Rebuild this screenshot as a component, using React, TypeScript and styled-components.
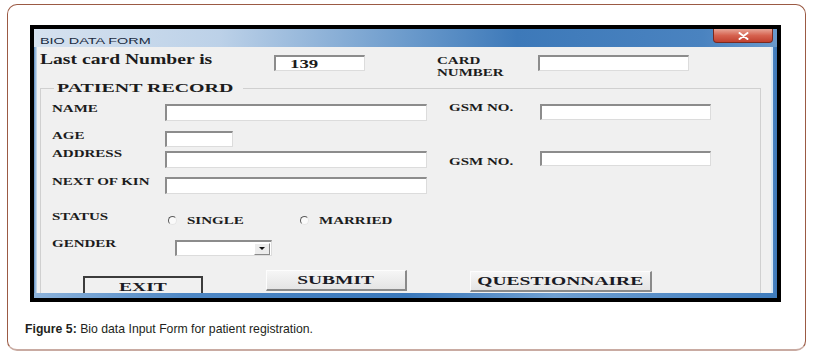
import styled, { createGlobalStyle } from "styled-components";

const Global = createGlobalStyle`
  html, body { margin: 0; padding: 0; background: #fff; }
  body { font-family: "Liberation Sans", Arial, sans-serif; }
`

const Card = styled.div`
  box-sizing: border-box;
  width: 799px;
  height: 347px;
  margin: 4px 0 0 7px;
  padding: 20px 0 0 17px;
  border: 1px solid #9b5a44;
  border-bottom: 2px solid #c9aba2;
  border-radius: 10px;
  background: #fff;
`

const Frame = styled.div`
  box-sizing: border-box;
  width: 751px;
  height: 277px;
  margin-left: 5px;
  border: 4px solid #000;
  display: flex;
  flex-direction: column;
`

const TitleBar = styled.div`
  height: 18px;
  flex-shrink: 0;
  display: flex;
  justify-content: space-between;
  align-items: flex-start;
  padding-left: 6px;
  background: linear-gradient(to right, #d6e2ef 0%, #bcd1e8 25%, #6c9bcc 50%, #3d79b9 65%, #4a83c0 90%, #6a9acd 100%);
`

const Title = styled.div`
  margin-top: 3px;
  font-family: "Liberation Sans", Arial, sans-serif;
  font-size: 9px;
  line-height: 18px;
  color: #1b2b40;
  white-space: nowrap;
  transform: scaleX(1.6);
  transform-origin: left center;
`

const CloseBtn = styled.div`
  box-sizing: border-box;
  width: 60px;
  height: 14px;
  margin-right: 4px;
  display: flex;
  align-items: center;
  justify-content: center;
  border: 1px solid #7a2a20;
  border-top: none;
  border-radius: 0 0 4px 4px;
  background: linear-gradient(to bottom, #e8a597 0%, #d6624f 50%, #c0402f 100%);
`

const WindowRow = styled.div`
  flex: 1;
  display: flex;
  min-height: 0;
`

const Edge = styled.div<{ $w: number; $bg: string }>`
  width: ${p => p.$w}px;
  flex-shrink: 0;
  background: ${p => p.$bg};
`

const BottomEdge = styled.div`
  height: 5px;
  flex-shrink: 0;
  background: linear-gradient(to right, #8db3db 0%, #4f88c5 20%, #3a78bb 50%, #6f9fd1 70%, #3f7cbd 100%);
`

const Body = styled.div`
  flex: 1;
  overflow: hidden;
  background: #f0f0f0;
  padding: 8px 0 0 3px;
  color: #1c1c1c;
`

const Row = styled.div<{ $mt?: number; $h: number }>`
  display: flex;
  align-items: flex-start;
  height: ${p => p.$h}px;
  margin-top: ${p => p.$mt ?? 0}px;
`

const Label = styled.div<{ $w: number; $mt?: number; $ml?: number; $size?: number; $lh?: number; $sx?: number }>`
  width: ${p => p.$w}px;
  flex-shrink: 0;
  margin-top: ${p => p.$mt ?? 0}px;
  margin-left: ${p => p.$ml ?? 0}px;
  font-family: "Liberation Serif", "Times New Roman", serif;
  font-weight: bold;
  font-size: ${p => p.$size ?? 10}px;
  line-height: ${p => p.$lh ?? 12}px;
  white-space: nowrap;
  transform: scaleX(${p => p.$sx ?? 1.5});
  transform-origin: left top;
`

const TextBox = styled.div<{ $w: number; $h: number; $ml?: number }>`
  box-sizing: border-box;
  width: ${p => p.$w}px;
  height: ${p => p.$h}px;
  margin-left: ${p => p.$ml ?? 0}px;
  flex-shrink: 0;
  background: #fff;
  border-top: 2px solid #8c8c8c;
  border-left: 2px solid #8c8c8c;
  border-right: 1px solid #dcdcdc;
  border-bottom: 1px solid #dcdcdc;
`

const BoxValue = styled.div`
  padding-left: 14px;
  font-family: "Liberation Serif", "Times New Roman", serif;
  font-weight: bold;
  font-size: 13px;
  line-height: 13px;
  transform: scaleX(1.45);
  transform-origin: 14px center;
`

const GroupBox = styled.fieldset`
  box-sizing: border-box;
  width: 721px;
  min-width: 0;
  margin: 10px 0 0 0;
  padding: 0;
  border: 1px solid #d0d0d0;
  border-bottom: none;
`

const Legend = styled.legend`
  box-sizing: border-box;
  width: 189px;
  height: 14px;
  margin-left: 13px;
  padding: 0 0 0 3px;
  font-family: "Liberation Serif", "Times New Roman", serif;
  font-weight: bold;
  font-size: 13px;
  line-height: 14px;
  white-space: nowrap;
  color: #1c1c1c;
`

const Stretch = styled.span<{ $sx: number }>`
  display: inline-block;
  transform: scaleX(${p => p.$sx});
  transform-origin: left center;
`

const GroupInner = styled.div`
  padding-left: 11px;
`

const RadioItem = styled.div<{ $w: number; $ml?: number }>`
  width: ${p => p.$w}px;
  margin-left: ${p => p.$ml ?? 0}px;
  flex-shrink: 0;
  display: flex;
  align-items: flex-start;
`

const RadioDot = styled.div`
  box-sizing: border-box;
  width: 9px;
  height: 9px;
  margin-top: 4px;
  margin-right: 10px;
  border-radius: 50%;
  border: 1px solid;
  border-color: #5a5a5a #e6e6e6 #e6e6e6 #5a5a5a;
  background: #fafafa;
  flex-shrink: 0;
`

const Combo = styled(TextBox)`
  display: flex;
  justify-content: flex-end;
  align-items: center;
  padding-right: 1px;
`

const ComboArrow = styled.div`
  box-sizing: border-box;
  width: 16px;
  height: 12px;
  display: flex;
  align-items: center;
  justify-content: center;
  background: #ececec;
  border: 1px solid;
  border-color: #fff #8a8a8a #8a8a8a #fff;
  &::before {
    content: "";
    border-left: 3px solid transparent;
    border-right: 3px solid transparent;
    border-top: 3px solid #111;
  }
`

const Button = styled.div<{ $w: number; $h: number; $ml: number; $mt?: number; $focused?: boolean }>`
  box-sizing: border-box;
  width: ${p => p.$w}px;
  height: ${p => p.$h}px;
  margin-left: ${p => p.$ml}px;
  margin-top: ${p => p.$mt ?? 0}px;
  flex-shrink: 0;
  display: flex;
  justify-content: center;
  align-items: ${p => (p.$focused ? "flex-start" : "center")};
  background: ${p => (p.$focused ? "#f0f0f0" : "linear-gradient(to bottom, #f6f6f6, #e4e4e4)")};
  border: ${p => (p.$focused ? "2px solid #3c3c3c" : "1px solid")};
  border-color: ${p => (p.$focused ? "#3c3c3c" : "#fdfdfd #8a8a8a #8a8a8a #fdfdfd")};
  border-right-width: 2px;
  border-bottom-width: 2px;
  font-family: "Liberation Serif", "Times New Roman", serif;
  font-weight: bold;
  font-size: 13px;
  line-height: ${p => (p.$focused ? "18px" : "16px")};
  color: #1a1a24;
`

const ButtonText = styled.span`
  display: inline-block;
  transform: scaleX(1.5);
  transform-origin: center;
`

const Caption = styled.div`
  margin-top: 20px;
  font-family: "Liberation Sans", Arial, sans-serif;
  font-size: 12.25px;
  line-height: 14px;
  color: #231f20;
  b { font-weight: bold; }
`

export default function App() {
  return (
    <>
      <Global />
      <Card>
        <Frame>
          <TitleBar>
            <Title>BIO DATA FORM</Title>
            <CloseBtn>
              <svg width="11" height="8" viewBox="0 0 11 8">
                <path d="M1.5 1 L9.5 7 M9.5 1 L1.5 7" stroke="#fff" strokeWidth="2" strokeLinecap="round" />
              </svg>
            </CloseBtn>
          </TitleBar>
          <WindowRow>
            <Edge $w={3} $bg="linear-gradient(to right, #5f8fc4, #cfe0f0)" />
            <Body>
              <Row $h={16}>
                <Label $w={234} $mt={-2} $size={14} $lh={14} $sx={1.4}>Last card Number is</Label>
                <TextBox $w={91} $h={16}>
                  <BoxValue>139</BoxValue>
                </TextBox>
                <Label $w={101} $ml={72} $lh={11.5}>CARD<br />NUMBER</Label>
                <TextBox $w={151} $h={16} />
              </Row>
              <GroupBox>
                <Legend><Stretch $sx={1.53}>PATIENT RECORD</Stretch></Legend>
                <GroupInner>
                  <Row $mt={9} $h={17}>
                    <Label $w={113} $mt={-1}>NAME</Label>
                    <TextBox $w={262} $h={17} />
                    <Label $w={91} $mt={-2} $ml={22}>GSM NO.</Label>
                    <TextBox $w={171} $h={16} />
                  </Row>
                  <Row $mt={10} $h={16}>
                    <Label $w={113} $mt={-1}>AGE</Label>
                    <TextBox $w={68} $h={16} />
                  </Row>
                  <Row $mt={4} $h={17}>
                    <Label $w={113} $mt={-3}>ADDRESS</Label>
                    <TextBox $w={262} $h={17} />
                    <Label $w={91} $mt={5} $ml={22}>GSM NO.</Label>
                    <TextBox $w={171} $h={15} />
                  </Row>
                  <Row $mt={9} $h={17}>
                    <Label $w={113} $mt={-1}>NEXT OF KIN</Label>
                    <TextBox $w={262} $h={17} />
                  </Row>
                  <Row $mt={18} $h={14}>
                    <Label $w={113} $mt={-1}>STATUS</Label>
                    <RadioItem $w={132} $ml={3}>
                      <RadioDot />
                      <Label $w={100} $mt={3}>SINGLE</Label>
                    </RadioItem>
                    <RadioItem $w={140}>
                      <RadioDot />
                      <Label $w={100} $mt={3}>MARRIED</Label>
                    </RadioItem>
                  </Row>
                  <Row $mt={14} $h={16}>
                    <Label $w={113} $mt={-2}>GENDER</Label>
                    <Combo $w={97} $h={16} $ml={10}>
                      <ComboArrow />
                    </Combo>
                  </Row>
                  <Row $mt={14} $h={30}>
                    <Button $w={120} $h={24} $ml={31} $mt={6} $focused>
                      <ButtonText>EXIT</ButtonText>
                    </Button>
                    <Button $w={141} $h={21} $ml={63}>
                      <ButtonText>SUBMIT</ButtonText>
                    </Button>
                    <Button $w={182} $h={21} $ml={63} $mt={1}>
                      <ButtonText>QUESTIONNAIRE</ButtonText>
                    </Button>
                  </Row>
                </GroupInner>
              </GroupBox>
            </Body>
            <Edge $w={6} $bg="linear-gradient(to right, #d6e6f5 0%, #d6e6f5 30%, #4a84c3 30%, #3d77b8 100%)" />
          </WindowRow>
          <BottomEdge />
        </Frame>
        <Caption>
          <b>Figure 5:</b> Bio data Input Form for patient registration.
        </Caption>
      </Card>
    </>
  )
}
